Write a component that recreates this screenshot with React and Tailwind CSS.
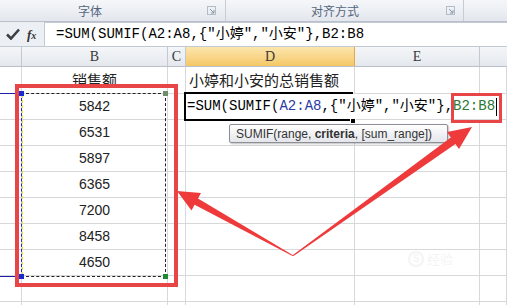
import React from "react";

const nums = ["5842", "6531", "5897", "6365", "7200", "8458", "4650"];
const grid = "border-r border-b border-[#d6d8dc]";
const crit = '{"小婷","小安"}';
const mono = "font-['Liberation_Mono','Noto_Sans_CJK_SC',monospace] text-[14px] text-black";

function Launcher() {
  return (
    <svg width="9" height="9" viewBox="0 0 9 9" className="shrink-0">
      <rect x="0.5" y="0.5" width="8" height="8" fill="none" stroke="#b4bcc8" />
      <path d="M3 3 L7 7 M7 4 V7 H4" stroke="#8a96a8" strokeWidth="1" fill="none" />
    </svg>
  );
}

function Row({ h, b, d }) {
  return (
    <div className={`flex ${h}`}>
      <div className={`w-[22px] shrink-0 ${grid}`} />
      <div className={`w-[146px] shrink-0 ${grid} flex items-center justify-center`}>{b}</div>
      <div className={`w-[18px] shrink-0 ${grid}`} />
      <div className={`w-[169px] shrink-0 ${grid} flex items-center pl-[3px] whitespace-nowrap`}>{d}</div>
      <div className={`w-[125px] shrink-0 ${grid}`} />
      <div className={`flex-1 ${grid}`} />
    </div>
  );
}

export default function App() {
  return (
    <div className="relative w-[507px] h-[305px] overflow-hidden bg-white font-['Liberation_Sans','Noto_Sans_CJK_SC',sans-serif] text-[#222]">
      {/* ribbon group labels */}
      <div className="flex h-[22px] bg-linear-to-b from-[#f5f7fa] to-[#e3e7ed] border-b border-[#b8c0cb] text-[12px] text-[#55657c] font-['Noto_Sans_CJK_SC',sans-serif]">
        <div className="w-[226px] flex items-center border-r border-[#c6ccd5]">
          <span className="ml-[78px]">字体</span>
          <div className="ml-auto mr-[9px]"><Launcher /></div>
        </div>
        <div className="w-[238px] flex items-center border-r border-[#c6ccd5]">
          <span className="ml-[85px]">对齐方式</span>
          <div className="ml-auto mr-[8px]"><Launcher /></div>
        </div>
        <div className="flex-1" />
      </div>

      {/* formula bar */}
      <div className="flex h-[25px] bg-[#eceff3] border-b border-[#c3c9d2]">
        <div className="w-[44px] shrink-0 flex items-center gap-[7px] pl-[6px]">
          <svg width="14" height="12" viewBox="0 0 14 12">
            <path d="M1 6.5 L5 10.5 L13 1.5" stroke="#3b3f46" strokeWidth="2.6" fill="none" />
          </svg>
          <span className="font-['Liberation_Serif',serif] italic font-bold text-[13px] text-[#333] leading-none">
            f<span className="text-[10px]">x</span>
          </span>
        </div>
        <div className="flex-1 bg-white border-l border-t border-[#c3c9d2] flex items-center pl-[11px] whitespace-nowrap">
          <span className={mono}>=SUM(SUMIF(A2:A8,{crit},B2:B8</span>
        </div>
      </div>

      {/* column headers */}
      <div className="flex h-[20px] bg-linear-to-b from-[#f4f6f8] to-[#e4e8ee] border-b border-[#b9c0ca] text-[14px] text-[#3a3a3a] font-['Liberation_Serif',serif]">
        <div className="w-[22px] shrink-0 border-r border-[#c3c9d2]" />
        <div className="w-[146px] shrink-0 border-r border-[#c3c9d2] flex items-center justify-center">B</div>
        <div className="w-[18px] shrink-0 border-r border-[#c3c9d2] flex items-center justify-center">C</div>
        <div className="w-[169px] shrink-0 border-r border-[#e0a94a] bg-linear-to-b from-[#fbe6ad] to-[#f5c765] flex items-center justify-center">D</div>
        <div className="w-[125px] shrink-0 border-r border-[#c3c9d2] flex items-center justify-center">E</div>
        <div className="flex-1" />
      </div>

      {/* cells */}
      <div className="text-[15px] font-['Noto_Sans_CJK_SC',sans-serif]">
        <Row h="h-[27px]" b={<span className="mt-[1px]">销售额</span>} d="小婷和小安的总销售额" />
        {nums.map((n) => (
          <Row key={n} h="h-[26px]" b={<span className="font-['Liberation_Sans',sans-serif] text-[14px]">{n}</span>} />
        ))}
        <Row h="h-[26px]" />
        <Row h="h-[26px]" />
      </div>

      {/* range highlight lines in the left column */}
      <div className="absolute left-0 top-[93px] w-[22px] h-[1px] bg-[#1c1ca8]" />
      <div className="absolute left-0 top-[276px] w-[22px] h-[1px] bg-[#1c1ca8]" />

      {/* copy marquee on B2:B8 */}
      <div className="absolute left-[21px] top-[93px] w-[145px] h-[184px] border border-dashed border-[#222] border-l-[#2626b0]" />
      <div className="absolute left-[22px] top-[95px] w-[1px] h-[180px] border-l border-dashed border-[#e8e040]" />
      <div className="absolute left-[19px] top-[91px] w-[5px] h-[5px] bg-[#1a2ad0]" />
      <div className="absolute left-[19px] top-[274px] w-[5px] h-[5px] bg-[#1a2ad0]" />
      <div className="absolute left-[163px] top-[91px] w-[5px] h-[5px] bg-[#6f8f6a]" />
      <div className="absolute left-[163px] top-[274px] w-[5px] h-[5px] bg-[#1f8a2f]" />

      {/* red highlight box */}
      <div className="absolute left-[15px] top-[84px] w-[163px] h-[203px] border-[4px] border-[#e84646]" />

      {/* editing cell */}
      <div className="absolute left-[184px] top-[94px] w-[318px] h-[25px] bg-white" />
      <div className="absolute left-[184px] top-[92px] w-[169px] h-[29px] border-2 border-r-0 border-black" />
      <div className="absolute left-[187px] top-[94px] h-[25px] flex items-center whitespace-nowrap">
        <span className={mono}>
          =SUM(SUMIF(<span className="text-[#2b3aa6]">A2:A8</span>,{crit},<span className="text-[#2b7a34]">B2:B8</span>
        </span>
        <span className="inline-block w-[1px] h-[18px] bg-black ml-[1px]" />
      </div>
      <div className="absolute left-[350px] top-[118px] w-[6px] h-[6px] bg-black border border-white" />
      <div className="absolute left-[451px] top-[93px] w-[51px] h-[30px] border-[3px] border-[#e84646]" />

      {/* function tooltip */}
      <div className="absolute left-[229px] top-[124px] w-[219px] h-[19px] rounded-[2px] border border-[#8c8f96] bg-linear-to-b from-[#ffffff] to-[#e4e6eb] shadow-[1px_1px_2px_rgba(0,0,0,0.25)] flex items-center pl-[6px] text-[12px] text-[#333] whitespace-nowrap">
        SUMIF(range,&nbsp;<b>criteria</b>, [sum_range])
      </div>

      {/* faint watermark */}
      <div className="absolute left-[408px] top-[249px] flex items-center gap-[3px] opacity-[0.06] text-[#555]">
        <span className="w-[16px] h-[16px] rounded-full border-2 border-[#555] flex items-center justify-center text-[10px] font-bold">S</span>
        <span className="text-[13px] font-['Noto_Sans_CJK_SC',sans-serif]">经验</span>
      </div>

      {/* arrows */}
      <svg className="absolute left-0 top-0" width="507" height="305" viewBox="0 0 507 305">
        <polygon
          points="177,191 201,193 198,198.5 293.5,255.5 292.5,256 194.6,204.7 191.5,210.4"
          fill="#ee3a3a"
        />
        <polygon
          points="472,127 459,149 455.4,144.1 293.6,256 292.6,255.2 450.8,137.5 447,132"
          fill="#ee3a3a"
        />
      </svg>
    </div>
  );
}
